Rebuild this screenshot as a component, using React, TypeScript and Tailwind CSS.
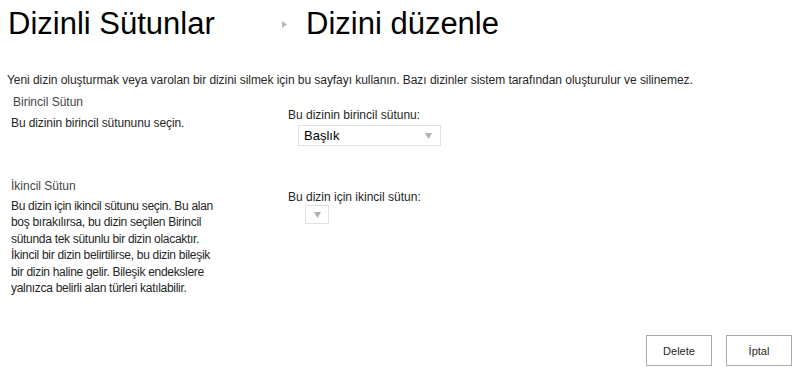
import React from 'react'

const font = { fontFamily: '"Liberation Sans", Arial, sans-serif' }

function Caret({ className }: { className?: string }) {
  return (
    <svg width="7" height="6" viewBox="0 0 7 6" className={className}>
      <path d="M0 0 L7 0 L3.5 6 Z" fill="#b1b1b1" />
    </svg>
  )
}

export default function App() {
  return (
    <div className="w-[800px] h-[378px] bg-white text-[#262626] overflow-hidden relative" style={font}>
      <div className="flex items-center pl-2 pt-[7px] h-[40px]">
        <h1 className="text-[31px] leading-[34px] text-black w-[274px]">Dizinli Sütunlar</h1>
        <svg width="5" height="7" viewBox="0 0 5 7" className="mr-[19px] mt-[2px]">
          <path d="M0 0 L5 3.5 L0 7 Z" fill="#b8b8b8" />
        </svg>
        <h2 className="text-[31px] leading-[34px] text-black">Dizini düzenle</h2>
      </div>

      <p className="pl-[7px] mt-[32px] text-[12px] leading-[16px] text-[#262626] tracking-[-0.05px]">
        Yeni dizin oluşturmak veya varolan bir dizini silmek için bu sayfayı kullanın. Bazı dizinler sistem tarafından oluşturulur ve silinemez.
      </p>

      <div className="flex mt-[7px]">
        <div className="w-[277px] pl-[11px]">
          <div className="pl-[2px] text-[12px] leading-[15px] text-[#444]">Birincil Sütun</div>
          <div className="mt-[5px] text-[12px] leading-[16px] tracking-[-0.1px]">Bu dizinin birincil sütununu seçin.</div>
        </div>
        <div className="pl-[11px] pt-[12px]">
          <div className="text-[12px] leading-[16px]">Bu dizinin birincil sütunu:</div>
          <div className="ml-[10px] mt-[2px] w-[143px] h-[21px] border border-[#e1e1e1] flex items-center justify-between pl-[5px] pr-[8px]">
            <span className="text-[13px] leading-[16px] text-black">Başlık</span>
            <Caret />
          </div>
        </div>
      </div>

      <div className="flex mt-[33px]">
        <div className="w-[277px] pl-[11px]">
          <div className="text-[12px] leading-[15px] text-[#444]">İkincil Sütun</div>
          <div className="mt-[4px] w-[212px] text-[12px] leading-[16.4px] tracking-[-0.3px]">
            Bu dizin için ikincil sütunu seçin. Bu alan boş bırakılırsa, bu dizin seçilen Birincil sütunda tek sütunlu bir dizin olacaktır. İkincil bir dizin belirtilirse, bu dizin bileşik bir dizin haline gelir. Bileşik endekslere yalnızca belirli alan türleri katılabilir.
          </div>
        </div>
        <div className="pl-[11px] pt-[10px]">
          <div className="text-[12px] leading-[16px]">Bu dizin için ikincil sütun:</div>
          <div className="ml-[17px] w-[24px] h-[19px] border border-[#e1e1e1] flex items-center justify-center">
            <Caret />
          </div>
        </div>
      </div>

      <div className="absolute right-[8px] bottom-[12px] flex gap-[14px]">
        <button className="w-[66px] h-[31px] pt-[2px] border border-[#ababab] bg-white text-[11px] text-[#262626]">Delete</button>
        <button className="w-[66px] h-[31px] pt-[2px] border border-[#ababab] bg-white text-[11px] text-[#262626]">İptal</button>
      </div>
    </div>
  )
}
